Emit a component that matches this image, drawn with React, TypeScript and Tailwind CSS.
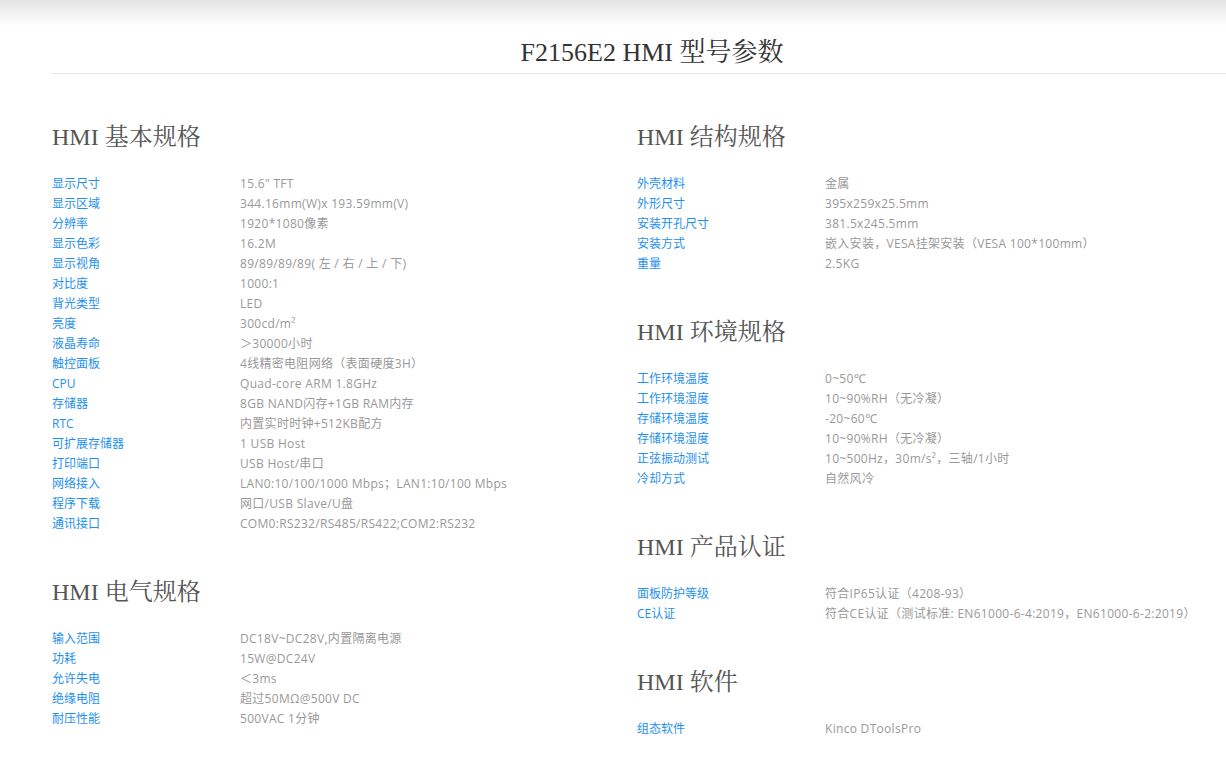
import React from "react";

type Row = [string, string];

const basic: Row[] = [
  ["显示尺寸", "15.6\" TFT"],
  ["显示区域", "344.16mm(W)x 193.59mm(V)"],
  ["分辨率", "1920*1080像素"],
  ["显示色彩", "16.2M"],
  ["显示视角", "89/89/89/89( 左 / 右 / 上 / 下)"],
  ["对比度", "1000:1"],
  ["背光类型", "LED"],
  ["亮度", "300cd/m²"],
  ["液晶寿命", "＞30000小时"],
  ["触控面板", "4线精密电阻网络（表面硬度3H）"],
  ["CPU", "Quad-core ARM 1.8GHz"],
  ["存储器", "8GB NAND闪存+1GB RAM内存"],
  ["RTC", "内置实时时钟+512KB配方"],
  ["可扩展存储器", "1 USB Host"],
  ["打印端口", "USB Host/串口"],
  ["网络接入", "LAN0:10/100/1000 Mbps；LAN1:10/100 Mbps"],
  ["程序下载", "网口/USB Slave/U盘"],
  ["通讯接口", "COM0:RS232/RS485/RS422;COM2:RS232"],
];

const electric: Row[] = [
  ["输入范围", "DC18V~DC28V,内置隔离电源"],
  ["功耗", "15W@DC24V"],
  ["允许失电", "＜3ms"],
  ["绝缘电阻", "超过50MΩ@500V DC"],
  ["耐压性能", "500VAC 1分钟"],
];

const structure: Row[] = [
  ["外壳材料", "金属"],
  ["外形尺寸", "395x259x25.5mm"],
  ["安装开孔尺寸", "381.5x245.5mm"],
  ["安装方式", "嵌入安装，VESA挂架安装（VESA 100*100mm）"],
  ["重量", "2.5KG"],
];

const env: Row[] = [
  ["工作环境温度", "0~50℃"],
  ["工作环境湿度", "10~90%RH（无冷凝）"],
  ["存储环境温度", "-20~60℃"],
  ["存储环境湿度", "10~90%RH（无冷凝）"],
  ["正弦振动测试", "10~500Hz，30m/s²，三轴/1小时"],
  ["冷却方式", "自然风冷"],
];

const cert: Row[] = [
  ["面板防护等级", "符合IP65认证（4208-93）"],
  ["CE认证", "符合CE认证（测试标准: EN61000-6-4:2019，EN61000-6-2:2019）"],
];

const soft: Row[] = [["组态软件", "Kinco DToolsPro"]];

const serif = { fontFamily: '"Liberation Serif", "Noto Serif CJK SC", "Noto Sans CJK SC", serif' };

function Section({ title, rows, first }: { title: string; rows: Row[]; first?: boolean }) {
  return (
    <div className={first ? "" : "mt-[43px]"}>
      <h2 className="text-[24px] leading-[30px] text-[#555]" style={serif}>
        {title}
      </h2>
      <div className="mt-[22px]">
        {rows.map(([k, v], i) => (
          <div key={i} className="flex text-[12px] leading-[20px]">
            <div className="w-[188px] shrink-0 text-[#1e90f0]">{k}</div>
            <div className="text-[#999] whitespace-nowrap tracking-[0.3px]">{v}</div>
          </div>
        ))}
      </div>
    </div>
  );
}

export default function App() {
  return (
    <div
      className="w-[1226px] min-h-[771px] overflow-hidden bg-white"
      style={{ fontFamily: '"Open Sans", "Noto Sans", "Noto Sans CJK SC", sans-serif' }}
    >
      <div className="h-[26px] bg-gradient-to-b from-[#e4e4e4] to-white" />
      <div className="pl-[52px] w-[1252px]">
        <div className="mt-[7px] border-b border-[#e8e8e8]">
          <h1 className="text-center text-[26px] leading-[40px] text-[#333]" style={serif}>
            F2156E2 HMI 型号参数
          </h1>
        </div>
        <div className="flex mt-[48px]">
          <div className="w-[585px] shrink-0">
            <Section title="HMI 基本规格" rows={basic} first />
            <Section title="HMI 电气规格" rows={electric} />
          </div>
          <div className="flex-1">
            <Section title="HMI 结构规格" rows={structure} first />
            <Section title="HMI 环境规格" rows={env} />
            <Section title="HMI 产品认证" rows={cert} />
            <Section title="HMI 软件" rows={soft} />
          </div>
        </div>
      </div>
    </div>
  );
}
